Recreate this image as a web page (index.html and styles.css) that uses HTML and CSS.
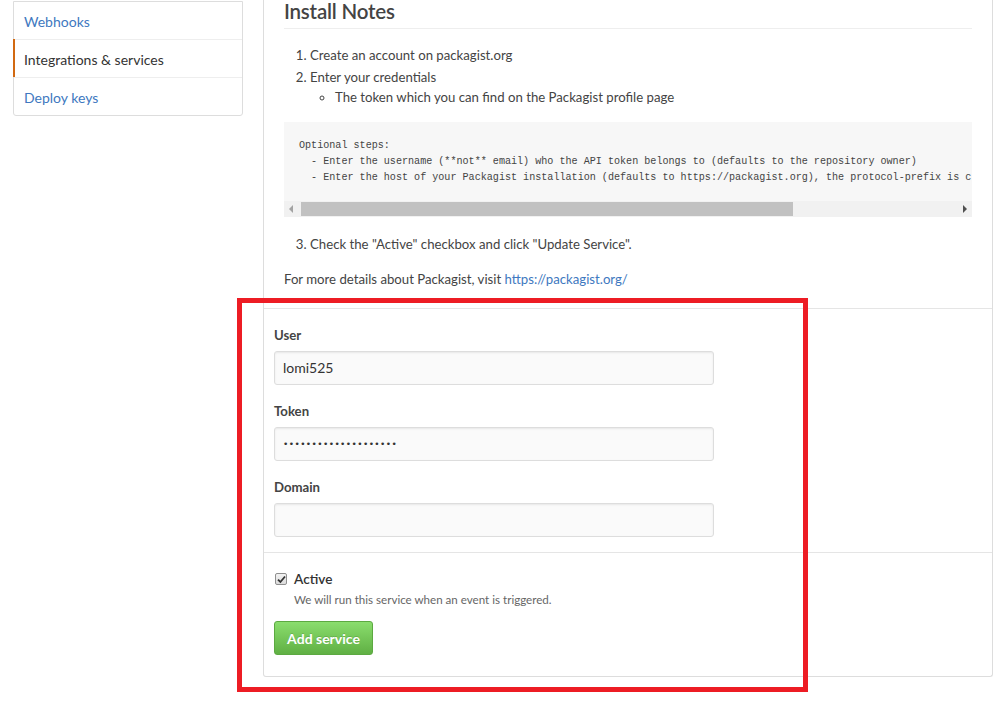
FILE: index.html
```html
<!DOCTYPE html>
<html>
<head>
<meta charset="utf-8">
<link rel="stylesheet" href="styles.css">
</head>
<body>
<div class="page">
  <nav class="menu">
    <a class="menu-item" href="#">Webhooks</a>
    <a class="menu-item selected" href="#">Integrations &amp; services</a>
    <a class="menu-item" href="#">Deploy keys</a>
  </nav>
  <div class="panel">
    <div class="notes">
      <h2 class="notes-title">Install Notes</h2>
      <ol class="steps">
        <li>Create an account on packagist.org</li>
        <li>Enter your credentials
          <ul class="sub">
            <li>The token which you can find on the Packagist profile page</li>
          </ul>
        </li>
      </ol>
      <div class="code">
        <pre class="code-text">Optional steps:
  - Enter the username (**not** email) who the API token belongs to (defaults to the repository owner)
  - Enter the host of your Packagist installation (defaults to https://packagist.org), the protocol-prefix is c</pre>
        <div class="scrollbar">
          <span class="arrow arrow-left"></span>
          <span class="track"><span class="thumb"></span></span>
          <span class="arrow arrow-right"></span>
        </div>
      </div>
      <ol class="steps steps-3" start="3">
        <li>Check the "Active" checkbox and click "Update Service".</li>
      </ol>
      <p class="more">For more details about Packagist, visit <a href="#">https://packagist.org/</a></p>
    </div>
    <div class="fields">
      <div class="field">
        <label class="label">User</label>
        <div class="input">lomi525</div>
      </div>
      <div class="field">
        <label class="label">Token</label>
        <div class="input dots">••••••••••••••••••••</div>
      </div>
      <div class="field">
        <label class="label">Domain</label>
        <div class="input"></div>
      </div>
    </div>
    <div class="actions">
      <div class="check-row">
        <span class="checkbox"><svg width="9" height="9" viewBox="0 0 9 9"><path d="M1 4.6 L3.4 7 L8 1.5" fill="none" stroke="#333" stroke-width="1.8"/></svg></span>
        <span class="check-label">Active</span>
      </div>
      <p class="note">We will run this service when an event is triggered.</p>
      <button class="btn">Add service</button>
    </div>
  </div>
</div>
<div class="annotation"></div>
</body>
</html>
```
FILE: styles.css
```css
* { box-sizing: border-box; }
html, body { margin: 0; padding: 0; background: #fff; }
body {
  font-family: Lato, "Open Sans", sans-serif;
  font-size: 13.2px;
  color: #333;
  width: 1003px;
  height: 706px;
  overflow: hidden;
  position: relative;
}
a { color: #4078c0; text-decoration: none; }

.page {
  display: flex;
  align-items: flex-start;
  padding-left: 13px;
  gap: 20px;
}

.menu {
  width: 230px;
  margin-top: 1px;
  border: 1px solid #ddd;
  border-radius: 0 0 3px 3px;
  display: flex;
  flex-direction: column;
  font-size: 14px;
}
.menu-item {
  display: block;
  height: 38px;
  padding-top: 2px;
  line-height: 35px;
  padding-left: 10px;
  border-top: 1px solid #eee;
  color: #4078c0;
  position: relative;
}
.menu-item:first-child { border-top: none; height: 37px; }
.menu-item.selected { color: #333; }
.menu-item.selected::before {
  content: "";
  position: absolute;
  left: -1px;
  top: -1px;
  bottom: 0;
  width: 2px;
  background: #d26911;
}

.panel {
  width: 730px;
  height: 677px;
  border: 1px solid #ddd;
  border-top: none;
  border-radius: 0 0 3px 3px;
}

.notes {
  padding: 0 20px 19px 20px;
  border-bottom: 1px solid #e5e5e5;
}
.notes-title {
  margin: 0;
  font-size: 20.5px;
  font-weight: 600;
  color: #444;
  line-height: 23px;
  height: 29px;
  border-bottom: 1px solid #eee;
  letter-spacing: -0.2px;
}
.steps {
  margin: 16px 0 0 0;
  padding-left: 26px;
  line-height: 20px;
  color: #444;
}
.steps > li + li { margin-top: 2px; }
.sub {
  margin: 0;
  padding-left: 25px;
  list-style: circle;
}
.code {
  margin-top: 15px;
  background: #f7f7f7;
}
.code-text {
  margin: 0;
  padding: 16px 15px 15px 15px;
  font-family: "Liberation Mono", "DejaVu Sans Mono", monospace;
  font-size: 10.1px;
  line-height: 16px;
  color: #444;
  overflow: hidden;
  white-space: pre;
}
.scrollbar {
  height: 16px;
  background: #f1f1f1;
  display: flex;
  align-items: center;
}
.arrow {
  width: 17px;
  height: 16px;
  position: relative;
}
.arrow-left::after {
  content: "";
  position: absolute;
  left: 5px;
  top: 4px;
  border-style: solid;
  border-width: 4px 4px 4px 0;
  border-color: transparent #a3a3a3 transparent transparent;
}
.arrow-right::after {
  content: "";
  position: absolute;
  left: 8px;
  top: 4px;
  border-style: solid;
  border-width: 4px 0 4px 4px;
  border-color: transparent transparent transparent #505050;
}
.track {
  flex: 1;
  height: 14px;
  display: flex;
}
.thumb {
  width: 492px;
  height: 14px;
  background: #c1c1c1;
}
.steps-3 { margin-top: 17px; }
.more {
  margin: 15px 0 0 0;
  line-height: 20px;
  color: #444;
}

.fields {
  padding: 16px 10px 15px 10px;
  border-bottom: 1px solid #e5e5e5;
  display: flex;
  flex-direction: column;
  gap: 16px;
}
.field {
  display: flex;
  flex-direction: column;
  gap: 6px;
}
.label {
  font-weight: 700;
  line-height: 20px;
  color: #444;
}
.input {
  width: 440px;
  height: 34px;
  padding: 0 8px;
  line-height: 32px;
  background: #fafafa;
  border: 1px solid #ddd;
  border-radius: 3px;
  box-shadow: inset 0 1px 2px rgba(0,0,0,0.075);
  font-size: 14px;
  color: #333;
}
.dots {
  font-family: "DejaVu Sans", sans-serif;
  font-size: 9px;
  letter-spacing: 0.4px;
  color: #333;
}

.actions {
  padding: 16px 10px 20px 10px;
}
.check-row {
  display: flex;
  align-items: center;
  height: 20px;
  gap: 7px;
}
.checkbox {
  width: 12px;
  height: 12px;
  margin-left: 1px;
  border: 1px solid #8f8f8f;
  border-radius: 2px;
  background: linear-gradient(#f2f2f2, #dcdcdc);
  display: flex;
  align-items: center;
  justify-content: center;
}
.check-label {
  font-weight: 600;
  font-size: 13.6px;
  color: #333;
}
.note {
  margin: 2px 0 0 20px;
  font-size: 11.6px;
  line-height: 17px;
  color: #666;
}
.btn {
  margin-top: 13px;
  width: 99px;
  height: 34px;
  padding: 0;
  font-family: Lato, "Open Sans", sans-serif;
  font-size: 14px;
  font-weight: 700;
  color: #fff;
  text-shadow: 0 -1px 0 rgba(0,0,0,0.15);
  background: linear-gradient(#8add6d, #60b044);
  border: 1px solid #5ca941;
  border-radius: 3px;
}

.annotation {
  position: absolute;
  left: 237px;
  top: 298px;
  width: 571px;
  height: 394px;
  border: 5px solid #ed1c24;
  pointer-events: none;
}
```
